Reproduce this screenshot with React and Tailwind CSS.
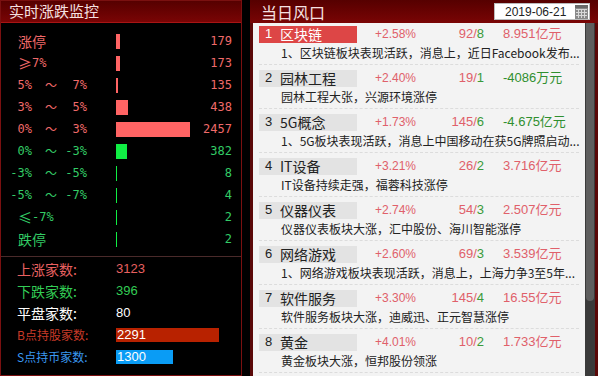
import React from "react";

const CJK = "font-['Noto_Sans_CJK_SC',sans-serif]";
const MONO = "font-['DejaVu_Sans_Mono','Noto_Sans_CJK_SC',monospace]";
const SANS = "font-['Liberation_Sans','Noto_Sans_CJK_SC',sans-serif]";

const RED = "text-[#f06a6a]";
const GREEN = "text-[#33cc66]";

const rows = [
  { kind: "single", label: "涨停", big: true, up: true, bar: 4, value: "179" },
  { kind: "cmp", sym: "≥", rest: "7%", up: true, bar: 4, value: "173" },
  { kind: "range", a: "5%", b: "7%", up: true, bar: 2, value: "135" },
  { kind: "range", a: "3%", b: "5%", up: true, bar: 12, value: "438" },
  { kind: "range", a: "0%", b: "3%", up: true, bar: 74, value: "2457" },
  { kind: "range", a: "0%", b: "-3%", up: false, bar: 11, value: "382" },
  { kind: "range", a: "-3%", b: "-5%", up: false, bar: 1, value: "8" },
  { kind: "range", a: "-5%", b: "-7%", up: false, bar: 1, value: "4" },
  { kind: "cmp", sym: "≤", rest: "-7%", up: false, bar: 1, value: "2" },
  { kind: "single", label: "跌停", big: true, up: false, bar: 1, value: "2" },
];

const items = [
  { n: "1", name: "区块链", pct: "+2.58%", up: "92", down: "8", amt: "8.951亿元", neg: false, desc: "1、区块链板块表现活跃，消息上，近日Facebook发布...", active: true },
  { n: "2", name: "园林工程", pct: "+2.40%", up: "19", down: "1", amt: "-4086万元", neg: true, desc: "园林工程大张，兴源环境涨停" },
  { n: "3", name: "5G概念", pct: "+1.73%", up: "145", down: "6", amt: "-4.675亿元", neg: true, desc: "1、5G板块表现活跃，消息上中国移动在获5G牌照启动..." },
  { n: "4", name: "IT设备", pct: "+3.21%", up: "26", down: "2", amt: "3.716亿元", neg: false, desc: "IT设备持续走强，福蓉科技涨停" },
  { n: "5", name: "仪器仪表", pct: "+2.74%", up: "54", down: "3", amt: "2.507亿元", neg: false, desc: "仪器仪表板块大涨，汇中股份、海川智能涨停" },
  { n: "6", name: "网络游戏", pct: "+2.60%", up: "69", down: "3", amt: "3.539亿元", neg: false, desc: "1、网络游戏板块表现活跃，消息上，上海力争3至5年..." },
  { n: "7", name: "软件服务", pct: "+3.30%", up: "145", down: "4", amt: "16.55亿元", neg: false, desc: "软件服务板块大涨，迪威迅、正元智慧涨停" },
  { n: "8", name: "黄金", pct: "+4.01%", up: "10", down: "2", amt: "1.733亿元", neg: false, desc: "黄金板块大涨，恒邦股份领涨" },
];

function LeftRow({ r }) {
  const color = r.up ? RED : GREEN;
  let label;
  if (r.kind === "single") {
    label = <span className={`pl-[17px] text-[14px] ${CJK}`}>{r.label}</span>;
  } else if (r.kind === "cmp") {
    label = (
      <span className="pl-[17px] flex items-center">
        <span className={`text-[14px] ${CJK}`}>{r.sym}</span>
        <span className={`text-[12px] ${MONO}`}>{r.rest}</span>
      </span>
    );
  } else {
    label = (
      <div className={`flex text-[12px] ${MONO}`}>
        <span className="w-[31px] text-right">{r.a}</span>
        <span className={`w-[25px] pl-[13px] ${CJK}`}>～</span>
        <span className="w-[30px] text-right">{r.b}</span>
      </div>
    );
  }
  return (
    <div className="flex items-center h-[22px]">
      <div className={`w-[115px] flex items-center ${color}`}>{label}</div>
      <div className="flex-1 flex items-center">
        <div
          className={`h-[15px] ${r.up ? "bg-[#ff6464]" : "bg-[#10ee44]"}`}
          style={{ width: r.bar }}
        />
      </div>
      <span className={`w-[50px] pr-[9px] text-right text-[12px] ${MONO} ${color}`}>{r.value}</span>
    </div>
  );
}

function StatRow({ label, labelCls, value, valueCls, bar }) {
  return (
    <div className="flex items-center h-[22px]">
      <span className={`w-[115px] pl-[16px] ${labelCls} ${CJK}`}>{label}</span>
      {bar ? (
        <div className={`h-[14px] ${bar} text-white text-[13px] leading-[14px] pl-[1px] ${SANS}`}>{value}</div>
      ) : (
        <span className={`text-[13px] ${SANS} ${valueCls}`}>{value}</span>
      )}
    </div>
  );
}

function CalendarIcon() {
  return (
    <svg width="13" height="14" viewBox="0 0 13 14">
      <rect x="0" y="0" width="13" height="14" fill="#8a8a8a" />
      <rect x="0" y="0" width="13" height="3" fill="#6a6a6a" />
      {[4, 7, 10].map((y) => (
        <rect key={"h" + y} x="1" y={y} width="11" height="1" fill="#d8d8d8" />
      ))}
      {[3, 6, 9].map((x) => (
        <rect key={"v" + x} x={x} y="4" width="1" height="9" fill="#d8d8d8" />
      ))}
    </svg>
  );
}

function Item({ it }) {
  return (
    <div className="h-[44px] flex flex-col">
      <div className="h-[20px] flex items-center">
        <div
          className={`ml-[6px] w-[98px] h-[17px] flex items-center ${
            it.active ? "bg-[#dd4646] text-white" : "bg-[#e3e3e3] text-[#222]"
          }`}
        >
          <span className={`w-[21px] pl-[6px] text-[13px] ${SANS}`}>{it.n}</span>
          <span className={`text-[14px] leading-[17px] ${CJK}`}>{it.name}</span>
        </div>
        <span className={`ml-[18px] w-[60px] text-[12px] ${SANS} text-[#e0606a]`}>{it.pct}</span>
        <span className={`w-[49px] text-right text-[13px] ${SANS}`}>
          <span className="text-[#e0606a]">{it.up}/</span>
          <span className="text-[#3a9a3a]">{it.down}</span>
        </span>
        <span className={`ml-[19px] text-[13px] ${SANS} ${it.neg ? "text-[#2f8f2f]" : "text-[#e0606a]"}`}>
          {it.amt}
        </span>
      </div>
      <div className={`h-[17px] pl-[28px] text-[12px] leading-[17px] text-[#222] whitespace-nowrap overflow-hidden ${CJK}`}>
        {it.desc}
      </div>
      <div className="h-[4px] mx-[6px] border-b border-dashed border-[#dcdcdc]" />
    </div>
  );
}

export default function App() {
  return (
    <div className="w-[598px] h-[376px] bg-black flex overflow-hidden">
      {/* Left panel */}
      <div className="w-[242px] h-[376px] border border-[#7a1010] flex flex-col">
        <div className="h-[22px] bg-gradient-to-b from-[#560000] to-[#7a0505] border-b border-[#a81414] flex items-center">
          <span className={`pl-[8px] text-[15px] text-[#f5e0e0] ${CJK}`}>实时涨跌监控</span>
        </div>
        <div className="pt-[7px]">
          {rows.map((r, i) => (
            <LeftRow key={i} r={r} />
          ))}
        </div>
        <div className="mt-[6px] h-[1px] bg-[#4a2a2a]" />
        <div className="pt-[1px]">
          <StatRow label="上涨家数:" labelCls="text-[14px] text-[#e86060]" value="3123" valueCls="text-[#e86060]" />
          <StatRow label="下跌家数:" labelCls="text-[14px] text-[#33cc55]" value="396" valueCls="text-[#33cc55]" />
          <StatRow label="平盘家数:" labelCls="text-[14px] text-white" value="80" valueCls="text-white" />
          <StatRow label="B点持股家数:" labelCls="text-[12px] text-[#c83a28]" value="2291" bar="w-[103px] bg-[#b82200]" />
          <StatRow label="S点持币家数:" labelCls="text-[12px] text-[#3a98f0]" value="1300" bar="w-[57px] bg-[#0a9cf5]" />
        </div>
      </div>

      {/* Right panel */}
      <div className="ml-[8px] w-[348px] h-[376px] flex flex-col bg-[#5a0808]">
        <div className="h-[23px] bg-gradient-to-b from-[#560000] to-[#7a0505] flex items-center justify-between">
          <span className={`pl-[11px] text-[16px] text-[#f5e0e0] ${CJK}`}>当日风口</span>
          <div className="mr-[8px] w-[96px] h-[17px] bg-white border border-[#bbb] flex items-center justify-between">
            <span className={`pl-[10px] text-[12px] text-[#222] ${SANS}`}>2019-06-21</span>
            <span className="mr-[1px] flex"><CalendarIcon /></span>
          </div>
        </div>
        <div className="flex-1 flex pl-[3px] pr-[3px] pb-[3px]">
          <div className="flex-1 bg-[#f3f3f3] pt-[1px] overflow-hidden">
            {items.map((it) => (
              <Item key={it.n} it={it} />
            ))}
          </div>
          <div className="w-[10px] bg-[#3a3a3a] flex justify-center">
            <div className="w-[8px] h-[278px] bg-[#5e5e5e] rounded-b-[4px]" />
          </div>
        </div>
      </div>
    </div>
  );
}
